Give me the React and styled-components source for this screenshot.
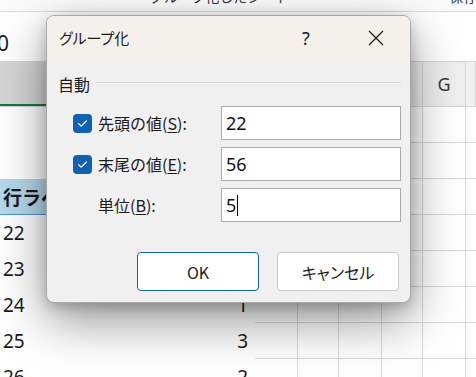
import React from "react";
import styled, { createGlobalStyle } from "styled-components";

const Global = createGlobalStyle`
  html, body { margin: 0; padding: 0; background: #fff; }
  body { font-family: "Noto Sans CJK JP", "Noto Sans", sans-serif; }
  * { box-sizing: border-box; }
`;

const COLS = "150px 105px 43px 41px 43px 41px 43px 1fr";

const Page = styled.div`
  position: relative;
  width: 476px;
  height: 377px;
  overflow: hidden;
  display: flex;
  flex-direction: column;
  background: #fff;
`;

const TopStrip = styled.div`
  flex: none;
  height: 12px;
  overflow: hidden;
  display: flex;
  align-items: flex-start;
  gap: 160px;
  padding-left: 150px;
  border-bottom: 1px solid #dadada;
  box-shadow: 0 1px 3px rgba(0, 0, 0, 0.08);
  background: #fbfbfb;
`;

const TopText = styled.span`
  font-size: 14px;
  line-height: 14px;
  margin-top: -11px;
  color: #333;
  white-space: nowrap;
`;

const FormulaBar = styled.div`
  flex: none;
  height: 49px;
  display: flex;
  align-items: center;
  padding-top: 12px;
  background: #fff;
`;

const FormulaValue = styled.span`
  font-family: "Noto Sans", sans-serif;
  font-size: 21px;
  line-height: 24px;
  margin-left: -3px;
  color: #222;
`;

const HeaderRow = styled.div`
  flex: none;
  height: 46px;
  display: grid;
  grid-template-columns: ${COLS};
  border-top: 1px solid #d4d4d4;
  border-bottom: 1px solid #d4d4d4;
  background: #efefef;
`;

const ColHead = styled.div`
  display: flex;
  align-items: center;
  justify-content: center;
  font-family: "Noto Sans", sans-serif;
  font-size: 18px;
  color: #3a3a3a;
  border-right: 1px solid #d7d7d7;
  background: ${(p) => (p.$selected ? "#d5d5d5" : "transparent")};
  box-shadow: ${(p) => (p.$selected ? "inset 0 -2px 0 #107c41" : "none")};
`;

const GridRow = styled.div`
  flex: none;
  height: 36px;
  display: grid;
  grid-template-columns: ${COLS};
`;

const Cell = styled.div`
  display: flex;
  align-items: center;
  justify-content: ${(p) => (p.$right ? "flex-end" : "flex-start")};
  padding: 0 7px 0 3px;
  font-family: "Noto Sans", "Noto Sans CJK JP", sans-serif;
  font-size: 19px;
  font-weight: ${(p) => (p.$head ? 700 : 400)};
  color: #1a1a1a;
  white-space: nowrap;
  overflow: hidden;
  background: ${(p) => (p.$head ? "#b4d9ea" : "#fff")};
  border-right: ${(p) => (p.$grid ? "1px solid #d7d7d7" : "none")};
  border-bottom: ${(p) =>
    p.$head ? "1px solid #4f95d6" : p.$grid ? "1px solid #d7d7d7" : "none"};
`;

/* ---------- Dialog ---------- */

const Dialog = styled.div`
  position: absolute;
  left: 46px;
  top: 15px;
  width: 365px;
  height: 288px;
  display: flex;
  flex-direction: column;
  border: 1px solid #a9a9a9;
  border-radius: 8px;
  overflow: hidden;
  background: #f0f0f0;
  box-shadow: 0 18px 50px rgba(0, 0, 0, 0.42), 0 4px 14px rgba(0, 0, 0, 0.2);
`;

const TitleBar = styled.div`
  flex: none;
  height: 44px;
  display: flex;
  align-items: center;
  padding: 0 11px 0 12px;
  background: #f4f1ec;
`;

const DialogTitle = styled.span`
  font-size: 15px;
  line-height: 20px;
  color: #1b1b1b;
  font-feature-settings: "palt";
`;

const TitleButtons = styled.div`
  margin-left: auto;
  display: flex;
  gap: 24px;
`;

const TitleButton = styled.div`
  width: 46px;
  height: 30px;
  display: flex;
  align-items: center;
  justify-content: center;
  font-family: "Noto Sans", sans-serif;
  font-size: 18px;
  color: #1b1b1b;
`;

const Body = styled.div`
  flex: 1;
  display: flex;
  flex-direction: column;
  padding: 14px 9px 11px 11px;
`;

const Legend = styled.div`
  height: 20px;
  display: flex;
  align-items: center;
  gap: 6px;
  font-size: 16px;
  line-height: 20px;
  color: #1a1a1a;
`;

const LegendLine = styled.div`
  flex: 1;
  height: 1px;
  margin-top: -3px;
  background: #d8d8d8;
`;

const Fields = styled.div`
  display: flex;
  flex-direction: column;
  gap: 7px;
  margin-top: 12px;
`;

const FieldRow = styled.div`
  height: 34px;
  display: flex;
  align-items: center;
  padding-left: 15px;
`;

const CheckSlot = styled.div`
  flex: none;
  width: 19px;
  height: 19px;
  margin-right: 6px;
  display: flex;
  align-items: center;
  justify-content: center;
  border-radius: 4px;
  background: ${(p) => (p.$checked ? "#0f62b2" : "transparent")};
`;

const Label = styled.span`
  font-size: 16px;
  line-height: 20px;
  color: #1a1a1a;
  white-space: nowrap;
  u {
    text-decoration-thickness: 1px;
    text-underline-offset: 2px;
  }
`;

const Input = styled.div`
  margin-left: auto;
  width: 180px;
  height: 34px;
  display: flex;
  align-items: center;
  padding-left: 4px;
  background: #fff;
  border: 1px solid #adadad;
  font-family: "Noto Sans", sans-serif;
  font-size: 18px;
  color: #111;
`;

const Caret = styled.span`
  display: inline-block;
  width: 1px;
  height: 21px;
  margin-left: 1px;
  background: #000;
`;

const ButtonRow = styled.div`
  margin-top: auto;
  display: flex;
  justify-content: flex-end;
  gap: 18px;
  padding-right: 2px;
`;

const Button = styled.div`
  width: 122px;
  height: 39px;
  display: flex;
  align-items: center;
  justify-content: center;
  background: #fff;
  border-radius: 4px;
  border: 1px solid ${(p) => (p.$primary ? "#0a64c0" : "#c9c9c9")};
  font-size: 16px;
  color: #1a1a1a;
  font-feature-settings: "palt";
`;

const CheckIcon = () => (
  <svg width="19" height="19" viewBox="0 0 19 19">
    <path d="M5.6 9.6 L8.2 12.2 L13.4 7" fill="none" stroke="#fff" strokeWidth="1.2" strokeLinecap="round" strokeLinejoin="round" />
  </svg>
);

const CloseIcon = () => (
  <svg width="16" height="16" viewBox="0 0 16 16">
    <path d="M1 1 L15 15 M15 1 L1 15" stroke="#1b1b1b" strokeWidth="1.2" fill="none" />
  </svg>
);

const rows = [
  { a: "", b: "" },
  { a: "", b: "" },
  { a: "行ラベル", b: "個数 / 値", head: true },
  { a: "22", b: "2" },
  { a: "23", b: "1" },
  { a: "24", b: "1" },
  { a: "25", b: "3" },
  { a: "26", b: "2" },
];

const letters = ["A", "B", "C", "D", "E", "F", "G", "H"];

const fields = [
  { checked: true, label: "先頭の値(", key: "S", value: "22" },
  { checked: true, label: "末尾の値(", key: "E", value: "56" },
  { checked: false, label: "単位(", key: "B", value: "5", caret: true },
];

export default function App() {
  return (
    <>
      <Global />
      <Page>
        <TopStrip>
          <TopText>グループ化したシート</TopText>
          <TopText>保存</TopText>
        </TopStrip>
        <FormulaBar>
          <FormulaValue>0</FormulaValue>
        </FormulaBar>
        <HeaderRow>
          {letters.map((l, i) => (
            <ColHead key={l} $selected={i === 0}>
              {l === "G" ? l : ""}
            </ColHead>
          ))}
        </HeaderRow>
        {rows.map((r, ri) => (
          <GridRow key={ri}>
            <Cell $head={r.head}>{r.a}</Cell>
            <Cell $head={r.head} $right={!r.head}>{r.b}</Cell>
            {letters.slice(2).map((l) => (
              <Cell key={l} $grid />
            ))}
          </GridRow>
        ))}

        <Dialog>
          <TitleBar>
            <DialogTitle>グループ化</DialogTitle>
            <TitleButtons>
              <TitleButton>?</TitleButton>
              <TitleButton>
                <CloseIcon />
              </TitleButton>
            </TitleButtons>
          </TitleBar>
          <Body>
            <Legend>
              自動
              <LegendLine />
            </Legend>
            <Fields>
              {fields.map((f) => (
                <FieldRow key={f.key}>
                  <CheckSlot $checked={f.checked}>{f.checked && <CheckIcon />}</CheckSlot>
                  <Label>
                    {f.label}
                    <u>{f.key}</u>):
                  </Label>
                  <Input>
                    {f.value}
                    {f.caret && <Caret />}
                  </Input>
                </FieldRow>
              ))}
            </Fields>
            <ButtonRow>
              <Button $primary>OK</Button>
              <Button>キャンセル</Button>
            </ButtonRow>
          </Body>
        </Dialog>
      </Page>
    </>
  );
}
